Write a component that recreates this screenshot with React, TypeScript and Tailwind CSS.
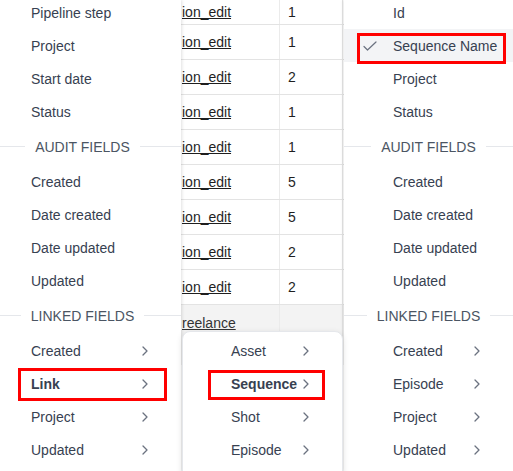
import React from "react";

const Chevron = () => (
  <svg width="6" height="10" viewBox="0 0 6 10" className="absolute right-[33px] top-1/2 -translate-y-1/2">
    <path d="M1 1 L5 5 L1 9" fill="none" stroke="#6b7280" strokeWidth="1.3" strokeLinecap="round" strokeLinejoin="round" />
  </svg>
);

const Check = () => (
  <svg width="14" height="10" viewBox="0 0 14 10" className="absolute left-[19px] top-1/2 -translate-y-1/2">
    <path d="M1 5.5 L4.5 9 L13 1" fill="none" stroke="#6b7280" strokeWidth="1.2" strokeLinecap="round" strokeLinejoin="round" />
  </svg>
);

type Item = { label: string; sub?: boolean; bold?: boolean; checked?: boolean; hover?: boolean };

const MenuItem = ({ item, pl }: { item: Item; pl: string }) => (
  <div
    className={`relative h-[33px] flex items-center ${pl} ${item.hover ? "bg-[#f3f4f6]" : ""} ${
      item.bold ? "font-bold text-[#374151]" : "text-[#374151]"
    }`}
  >
    {item.checked && <Check />}
    <span>{item.label}</span>
    {item.sub && <Chevron />}
  </div>
);

const Header = ({ label }: { label: string }) => (
  <div className="h-[37px] flex items-center">
    <div className="flex-1 h-px bg-[#e5e7eb]" />
    <span className="px-2.5 text-[#4b5563] uppercase">{label}</span>
    <div className="flex-1 h-px bg-[#e5e7eb]" />
  </div>
);

const leftTop: Item[] = [
  { label: "Pipeline step" },
  { label: "Project" },
  { label: "Start date" },
  { label: "Status" },
];
const audit: Item[] = [
  { label: "Created" },
  { label: "Date created" },
  { label: "Date updated" },
  { label: "Updated" },
];
const leftLinked: Item[] = [
  { label: "Created", sub: true },
  { label: "Link", sub: true, bold: true },
  { label: "Project", sub: true },
  { label: "Updated", sub: true },
];
const rightTop: Item[] = [
  { label: "Id" },
  { label: "Sequence Name", checked: true, hover: true },
  { label: "Project" },
  { label: "Status" },
];
const rightLinked: Item[] = [
  { label: "Created", sub: true },
  { label: "Episode", sub: true },
  { label: "Project", sub: true },
  { label: "Updated", sub: true },
];
const subItems: Item[] = [
  { label: "Asset", sub: true },
  { label: "Sequence", sub: true, bold: true },
  { label: "Shot", sub: true },
  { label: "Episode", sub: true },
];

const Menu = ({ top, linked, pl }: { top: Item[]; linked: Item[]; pl: string }) => (
  <div className="-mt-1">
    {top.map((it, i) => (
      <MenuItem key={"t" + i} item={it} pl={pl} />
    ))}
    <Header label="Audit fields" />
    {audit.map((it, i) => (
      <MenuItem key={"a" + i} item={it} pl={pl} />
    ))}
    <Header label="Linked fields" />
    {linked.map((it, i) => (
      <MenuItem key={"l" + i} item={it} pl={pl} />
    ))}
  </div>
);

const values = ["1", "1", "2", "1", "1", "5", "5", "2", "2"];

const Table = () => (
  <div className="w-[163px] shrink-0 text-[#1f1f1f] bg-white">
    {values.map((v, i) => (
      <div
        key={i}
        className={`flex border-b border-[#e3e3e3] ${i === 0 ? "h-[25px]" : "h-[35px]"}`}
      >
        <div className="w-[99px] flex items-center pl-px overflow-hidden whitespace-nowrap border-r border-[#ebebeb]">
          <span className="underline">ion_edit</span>
        </div>
        <div className="w-[63px] flex items-center pl-2 border-r border-[#e3e3e3]">{v}</div>
      </div>
    ))}
    <div className="flex h-[60px] bg-[#f3f3f3]">
      <div className="w-[99px] pt-[10px] pl-px overflow-hidden whitespace-nowrap border-r border-[#ebebeb] text-[#333]">
        <span className="underline">reelance</span>
      </div>
      <div className="w-[63px] border-r border-[#e3e3e3]" />
    </div>
  </div>
);

export default function App() {
  return (
    <div className="relative w-[513px] h-[471px] overflow-hidden bg-white flex font-['Liberation_Sans',Arial,sans-serif] text-[14px] leading-[16px]">
      <div className="-ml-4 w-[197px] shrink-0 bg-white relative z-10 shadow-[1px_0_3px_rgba(0,0,0,0.12)]">
        <Menu top={leftTop} linked={leftLinked} pl="pl-[47px]" />
      </div>
      <Table />
      <div className="w-[169px] shrink-0 bg-white relative z-10 shadow-[-1px_0_3px_rgba(0,0,0,0.1)]">
        <Menu top={rightTop} linked={rightLinked} pl="pl-[49px]" />
      </div>

      <div className="absolute left-[182px] top-[331px] w-[161px] h-[160px] bg-white rounded-lg border border-[#e5e7eb] shadow-[0_2px_6px_rgba(0,0,0,0.12)] z-20 pt-[2px]">
        {subItems.map((it, i) => (
          <MenuItem key={i} item={it} pl="pl-[48px]" />
        ))}
      </div>

      <div className="absolute left-[18px] top-[368px] w-[149px] h-[33px] border-[3px] border-[#ff0000] z-30 pointer-events-none" />
      <div className="absolute left-[208px] top-[370px] w-[117px] h-[30px] border-[3px] border-[#ff0000] z-30 pointer-events-none" />
      <div className="absolute left-[357px] top-[33px] w-[149px] h-[31px] border-[3px] border-[#ff0000] z-30 pointer-events-none" />
    </div>
  );
}
